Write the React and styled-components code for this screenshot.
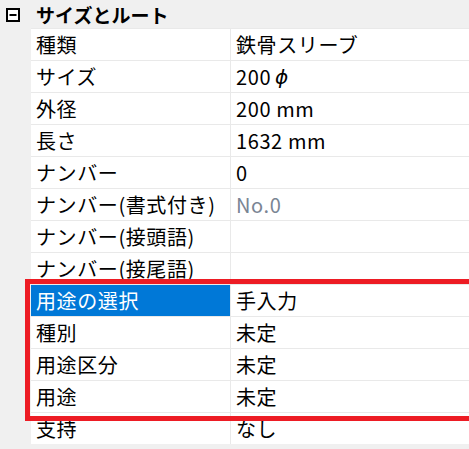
import React from "react";
import styled, { createGlobalStyle } from "styled-components";

const GlobalStyle = createGlobalStyle`
  html, body { margin: 0; padding: 0; background: #f0f0f0; }
  body { font-family: "Noto Sans CJK JP", "Noto Sans", sans-serif; }
`;

const Panel = styled.div`
  position: relative;
  width: 469px;
  height: 449px;
  overflow: hidden;
  background: #f0f0f0;
`;

const CategoryHeader = styled.div`
  height: 28px;
  display: flex;
  align-items: center;
  padding-left: 6px;
  gap: 16px;
  font-size: 19px;
  font-weight: 700;
  color: #000;
  line-height: 1;
`;

const Toggle = styled.svg`
  width: 14px;
  height: 14px;
  flex: none;
  margin-top: 1px;
`;

const Row = styled.div`
  display: grid;
  grid-template-columns: 31px 200px 1fr;
  height: 32px;
`;

const Gutter = styled.div`
  background: #f0f0f0;
`;

const Cell = styled.div`
  box-sizing: border-box;
  border-top: 1px solid #e9e9e9;
  display: flex;
  align-items: center;
  padding-left: 5px;
  font-size: 20px;
  letter-spacing: 0.6px;
  line-height: 1;
  white-space: nowrap;
  overflow: hidden;
`;

const NameCell = styled(Cell)`
  border-right: 1px solid #e9e9e9;
  background: ${(p) => (p.$selected ? "#0078d7" : "#ffffff")};
  color: ${(p) => (p.$selected ? "#ffffff" : "#000000")};
`;

const ValueCell = styled(Cell)`
  background: #ffffff;
  color: ${(p) => (p.$muted ? "#7a8594" : "#000000")};
`;

const Phi = styled.span`
  font-family: "DejaVu Sans", sans-serif;
  font-style: italic;
  margin-left: 4px;
`;

const Annotation = styled.div`
  position: absolute;
  left: 25px;
  top: 279px;
  width: 470px;
  height: 142px;
  box-sizing: border-box;
  border: 5px solid #ed1c24;
  pointer-events: none;
`;

const rows = [
  { name: "種類", value: "鉄骨スリーブ" },
  { name: "サイズ", value: <>200<Phi>{"\u03d5"}</Phi></> , key: "size" },
  { name: "外径", value: "200 mm" },
  { name: "長さ", value: "1632 mm" },
  { name: "ナンバー", value: "0" },
  { name: "ナンバー(書式付き)", value: "No.0", muted: true },
  { name: "ナンバー(接頭語)", value: "" },
  { name: "ナンバー(接尾語)", value: "" },
  { name: "用途の選択", value: "手入力", selected: true },
  { name: "種別", value: "未定" },
  { name: "用途区分", value: "未定" },
  { name: "用途", value: "未定" },
  { name: "支持", value: "なし" },
];

export default function App() {
  return (
    <>
      <GlobalStyle />
      <Panel>
        <CategoryHeader>
          <Toggle viewBox="0 0 14 14">
            <rect x="1" y="1" width="12" height="12" fill="#fff" stroke="#000" strokeWidth="2" />
            <rect x="3.5" y="6" width="7" height="2" fill="#000" />
          </Toggle>
          <span>サイズとルート</span>
        </CategoryHeader>
        {rows.map((r) => (
          <Row key={r.name}>
            <Gutter />
            <NameCell $selected={r.selected}>{r.name}</NameCell>
            <ValueCell $muted={r.muted}>{r.value}</ValueCell>
          </Row>
        ))}
        <Annotation />
      </Panel>
    </>
  );
}
